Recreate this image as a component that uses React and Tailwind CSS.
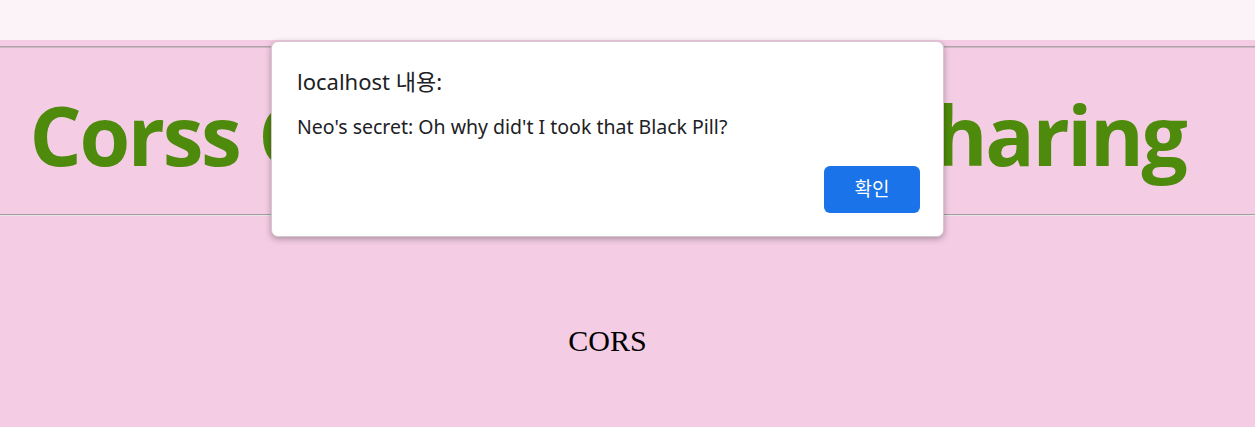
export default function App() {
  return (
    <div className="relative w-[1255px] h-[427px] overflow-hidden bg-[#f4cce4]">
      <div className="h-[40px] bg-[#fbf3f8]" />
      <div className="h-[6px]" />
      <div className="h-[2px] border-t border-b border-t-[#b3a0ab] border-b-[#cdb8c4]" />
      <div className="w-[1215px] h-[166px] flex items-center justify-center pt-[6px]">
        <h1
          className="text-[#4e8a0b] font-bold text-[82px] tracking-[-2.4px] leading-none whitespace-nowrap"
          style={{ fontFamily: '"Open Sans", "Noto Sans", sans-serif' }}
        >
          Corss Origin Resource Sharing
        </h1>
      </div>
      <div className="h-[2px] border-t border-b border-t-[#a0a0a0] border-b-[#ece4e8]" />
      <div className="h-[110px]" />
      <p
        className="w-[1215px] text-center text-[30px] text-black leading-none"
        style={{ fontFamily: '"Liberation Serif", serif' }}
      >
        CORS
      </p>

      <div
        className="absolute left-[271px] top-[41px] w-[673px] h-[196px] bg-white rounded-[7px] border border-[#d6c6cf] shadow-[0_2px_6px_rgba(0,0,0,0.3)] flex flex-col pl-[25px] pr-[23px] pt-[28px] pb-[23px]"
        style={{ fontFamily: '"Noto Sans", "Noto Sans CJK KR", sans-serif' }}
      >
        <div className="text-[22px] leading-none text-[#202124]">localhost 내용:</div>
        <div className="mt-[25px] text-[19.5px] leading-none text-[#202124]">
          Neo's secret: Oh why did't I took that Black Pill?
        </div>
        <div className="mt-auto flex justify-end">
          <button className="w-[96px] h-[47px] bg-[#1a73e8] rounded-[6px] text-white text-[19px] leading-none">
            확인
          </button>
        </div>
      </div>
    </div>
  );
}
